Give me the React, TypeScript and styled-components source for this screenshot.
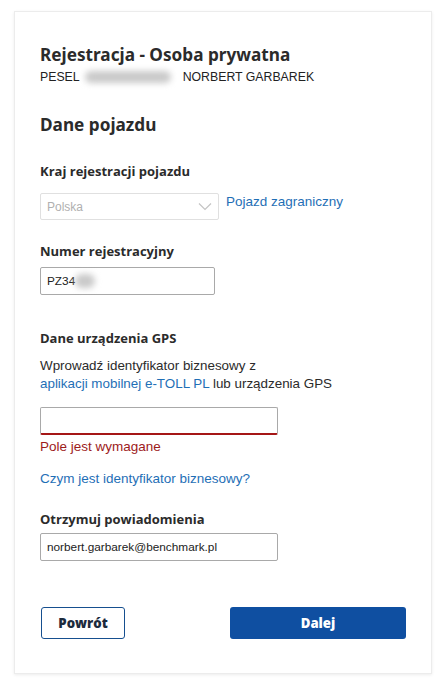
import React from "react";
import styled, { createGlobalStyle } from "styled-components";

const GlobalStyle = createGlobalStyle`
  html, body { margin: 0; padding: 0; background: #ffffff; }
  body { font-family: "Liberation Sans", Arial, sans-serif; color: #222; }
`;

const Page = styled.div`
  padding: 11px 13px 26px 14px;
`;

const Card = styled.div`
  box-sizing: border-box;
  width: 418px;
  height: 663px;
  background: #fff;
  border: 1px solid #ececec;
  box-shadow: 0 1px 3px rgba(0, 0, 0, 0.08);
  padding: 32px 25px 0 25px;
  display: flex;
  flex-direction: column;
`;

const Title = styled.h1`
  margin: 0;
  font-family: "Noto Sans", sans-serif;
  font-weight: 700;
  font-size: 17.2px;
  line-height: 22px;
  color: #2b2b2b;
`;

const Owner = styled.div`
  display: flex;
  align-items: center;
  margin-top: 3px;
  font-size: 12.3px;
  line-height: 16px;
  color: #222;
`;

const Blur = styled.span<{ $w: number; $h?: number }>`
  display: inline-block;
  width: ${(p) => p.$w}px;
  height: ${(p) => p.$h ?? 12}px;
  margin: 0 ${(p) => (p.$h ? 0 : 12)}px 0 ${(p) => (p.$h ? 0 : 5)}px;
  background: #c9c9c9;
  border-radius: 8px;
  filter: blur(3px);
`;

const Section = styled.h2`
  margin: 29px 0 0 0;
  font-family: "Noto Sans", sans-serif;
  font-weight: 700;
  font-size: 17.2px;
  line-height: 22px;
  color: #2b2b2b;
`;

const Label = styled.div<{ $top: number }>`
  margin-top: ${(p) => p.$top}px;
  font-family: "Open Sans", sans-serif;
  font-weight: 700;
  font-size: 13px;
  line-height: 18px;
  color: #2b2b2b;
`;

const Row = styled.div`
  display: flex;
  align-items: flex-start;
  gap: 7px;
  margin-top: 13px;
`;

const Select = styled.div`
  box-sizing: border-box;
  width: 179px;
  height: 27px;
  border: 1px solid #e0e0e0;
  border-radius: 2px;
  display: flex;
  align-items: center;
  justify-content: space-between;
  padding: 0 6px 0 6px;
  font-size: 12px;
  color: #b0b0b0;
`;

const Link = styled.a<{ $inline?: boolean }>`
  color: #1f6fb6;
  text-decoration: none;
  font-size: ${(p) => (p.$inline ? "inherit" : "13.5px")};
  line-height: 18px;
`;

const Input = styled.div<{ $w: number; $top: number; $error?: boolean }>`
  box-sizing: border-box;
  width: ${(p) => p.$w}px;
  height: 28px;
  margin-top: ${(p) => p.$top}px;
  border: 1px solid #a9a9a9;
  border-bottom: ${(p) => (p.$error ? "2px solid #a51616" : "1px solid #a9a9a9")};
  border-radius: 2px;
  display: flex;
  align-items: center;
  padding: 0 6px;
  font-size: 11.8px;
  color: #222;
`;

const Text = styled.div`
  margin-top: 10px;
  font-size: 13.4px;
  line-height: 18px;
  color: #2b2b2b;
`;

const Error = styled.div`
  margin-top: 4px;
  font-size: 13.5px;
  line-height: 16px;
  color: #9d1b1b;
`;

const Help = styled(Link)`
  display: block;
  margin-top: 15px;
`;

const Buttons = styled.div`
  display: flex;
  justify-content: space-between;
  margin-top: 46px;
  padding-left: 1px;
`;

const Button = styled.button<{ $primary?: boolean }>`
  box-sizing: border-box;
  height: 32px;
  width: ${(p) => (p.$primary ? 176 : 84)}px;
  border-radius: 3px;
  border: ${(p) => (p.$primary ? "none" : "1.5px solid #164f8f")};
  background: ${(p) => (p.$primary ? "#0f4fa1" : "#fff")};
  color: ${(p) => (p.$primary ? "#fff" : "#1c2b3d")};
  font-family: "Open Sans", sans-serif;
  font-weight: 800;
  font-size: 13.2px;
`;

function Chevron() {
  return (
    <svg width="14" height="9" viewBox="0 0 14 9" fill="none">
      <path d="M1 1.5 L7 7.5 L13 1.5" stroke="#c4c4c4" strokeWidth="1.2" />
    </svg>
  );
}

export default function App() {
  return (
    <>
      <GlobalStyle />
      <Page>
        <Card>
          <Title>Rejestracja - Osoba prywatna</Title>
          <Owner>
            PESEL
            <Blur $w={86} />
            NORBERT GARBAREK
          </Owner>
          <Section>Dane pojazdu</Section>

          <Label $top={26}>Kraj rejestracji pojazdu</Label>
          <Row>
            <Select>
              <span>Polska</span>
              <Chevron />
            </Select>
            <Link href="#">Pojazd zagraniczny</Link>
          </Row>

          <Label $top={22}>Numer rejestracyjny</Label>
          <Input $w={175} $top={7}>
            PZ34
            <Blur $w={20} $h={14} />
          </Input>

          <Label $top={34}>Dane urządzenia GPS</Label>
          <Text>
            Wprowadź identyfikator biznesowy z
            <br />
            <Link $inline href="#">aplikacji mobilnej e-TOLL PL</Link> lub urządzenia GPS
          </Text>
          <Input $w={238} $top={14} $error />
          <Error>Pole jest wymagane</Error>

          <Help href="#">Czym jest identyfikator biznesowy?</Help>

          <Label $top={22}>Otrzymuj powiadomienia</Label>
          <Input $w={238} $top={5}>norbert.garbarek@benchmark.pl</Input>

          <Buttons>
            <Button>Powrót</Button>
            <Button $primary>Dalej</Button>
          </Buttons>
        </Card>
      </Page>
    </>
  );
}
